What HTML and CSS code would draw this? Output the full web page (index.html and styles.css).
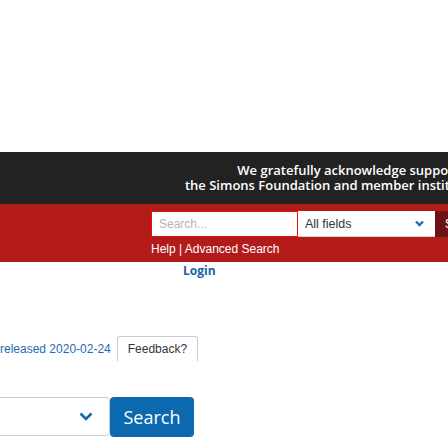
FILE: index.html
```html
<!DOCTYPE html>
<html lang="en">
<head>
<meta charset="utf-8">
<title>arXiv header</title>
<link rel="stylesheet" href="styles.css">
</head>
<body>
<div class="page">
  <div class="top-space"></div>
  <header class="ack">
    <div class="ack-inner">We gratefully acknowledge support from<br>the Simons Foundation and member institutions.</div>
  </header>
  <div class="bar">
    <div class="search-row">
      <div class="search-input">Search...</div>
      <div class="field-select">
        <span>All fields</span>
        <svg class="chev-small" width="9" height="7" viewBox="0 0 9 7"><polyline points="1,1.5 4.5,5 8,1.5" fill="none" stroke="#1e6bb8" stroke-width="2.4"/></svg>
      </div>
      <div class="go">Search</div>
    </div>
    <div class="help">Help | Advanced Search</div>
  </div>
  <div class="login">Login</div>
  <div class="release-row">
    <span class="released">released 2020-02-24</span>
    <span class="feedback">Feedback?</span>
  </div>
  <div class="bottom-search">
    <div class="bottom-select">
      <svg class="chev" width="14" height="9" viewBox="0 0 14 9"><polyline points="1.5,1.5 7,7 12.5,1.5" fill="none" stroke="#0b69b0" stroke-width="2.6"/></svg>
    </div>
    <div class="bottom-btn">Search</div>
  </div>
</div>
</body>
</html>
```

FILE: styles.css
```css
html, body {
  margin: 0;
  padding: 0;
  background: #fff;
}
.page {
  width: 448px;
  height: 448px;
  overflow: hidden;
  font-family: "Liberation Sans", Arial, sans-serif;
}
.top-space {
  height: 152px;
}
.ack {
  height: 52px;
  background: #222222;
  display: flex;
  align-items: center;
  justify-content: flex-end;
  overflow: hidden;
}
.ack-inner {
  flex-shrink: 0;
  margin-right: -45px;
  text-align: right;
  white-space: nowrap;
  color: #fff;
  font-family: "Open Sans", sans-serif;
  font-weight: 600;
  font-size: 13px;
  line-height: 15px;
}
.bar {
  height: 58px;
  box-sizing: border-box;
  background: #b31b1b;
  padding: 7px 0 0 151px;
}
.search-row {
  display: flex;
  height: 26px;
  width: 320px;
}
.search-input {
  width: 147px;
  box-sizing: border-box;
  border: 1px solid #ee1111;
  background: #fff;
  color: #b5b5b5;
  font-size: 12px;
  line-height: 24px;
  padding-left: 7px;
  flex-shrink: 0;
}
.field-select {
  width: 137px;
  box-sizing: border-box;
  background: #fff;
  border-bottom: 1px solid #d0d0d0;
  display: flex;
  align-items: center;
  justify-content: space-between;
  padding: 0 11px 0 7px;
  font-size: 12.5px;
  color: #333;
  flex-shrink: 0;
}
.go {
  width: 60px;
  flex-shrink: 0;
  background: #6e1313;
  color: #fff;
  font-size: 12px;
  line-height: 26px;
  padding-left: 10px;
}
.help {
  margin-top: 5px;
  font-size: 12px;
  line-height: 14px;
  color: #fff;
}
.login {
  padding: 1px 0 0 183px;
  font-family: "Open Sans", sans-serif;
  font-weight: 700;
  font-size: 12px;
  line-height: 16px;
  color: #1b62a3;
}
.release-row {
  margin-top: 57px;
  display: flex;
  align-items: flex-start;
  font-size: 12px;
  line-height: 14px;
}
.released {
  margin-left: 0;
  padding-top: 6px;
  color: #1f6bb5;
  white-space: nowrap;
}
.feedback {
  margin-left: 6px;
  border: 1px solid #cccccc;
  border-bottom: none;
  border-radius: 3px 3px 0 0;
  padding: 5px 10px;
  color: #333;
  white-space: nowrap;
}
.bottom-search {
  margin-top: 36px;
  display: flex;
  align-items: flex-start;
}
.bottom-select {
  margin-left: -20px;
  width: 130px;
  height: 39px;
  box-sizing: border-box;
  border: 1px solid #cccccc;
  border-radius: 4px;
  display: flex;
  align-items: center;
  justify-content: flex-end;
  padding-right: 16px;
}
.chev {
  display: block;
}
.bottom-btn {
  height: 40px;
  width: 84px;
  box-sizing: border-box;
  background: #0b69b0;
  border-radius: 4px;
  color: #fff;
  font-family: "Open Sans", sans-serif;
  font-size: 18px;
  line-height: 40px;
  text-align: center;
}
```
